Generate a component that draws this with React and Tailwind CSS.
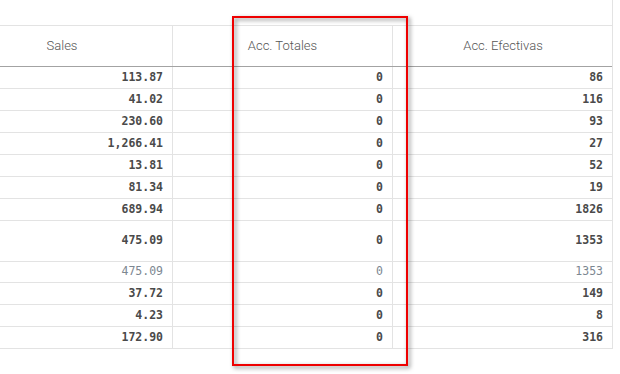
const rows = [
  { sales: '113.87', totales: '0', efectivas: '86', h: 'h-[22px]' },
  { sales: '41.02', totales: '0', efectivas: '116', h: 'h-[22px]' },
  { sales: '230.60', totales: '0', efectivas: '93', h: 'h-[22px]' },
  { sales: '1,266.41', totales: '0', efectivas: '27', h: 'h-[22px]' },
  { sales: '13.81', totales: '0', efectivas: '52', h: 'h-[22px]' },
  { sales: '81.34', totales: '0', efectivas: '19', h: 'h-[22px]' },
  { sales: '689.94', totales: '0', efectivas: '1826', h: 'h-[22px]' },
  { sales: '475.09', totales: '0', efectivas: '1353', h: 'h-[41px]' },
  { sales: '475.09', totales: '0', efectivas: '1353', h: 'h-[21px]', light: true },
  { sales: '37.72', totales: '0', efectivas: '149', h: 'h-[22px]' },
  { sales: '4.23', totales: '0', efectivas: '8', h: 'h-[22px]' },
  { sales: '172.90', totales: '0', efectivas: '316', h: 'h-[22px]' },
]

const headers = ['Sales', 'Acc. Totales', 'Acc. Efectivas']

function Cell({ children, light, last }) {
  return (
    <div
      className={`flex items-center justify-end pr-[9px] ${last ? '' : 'border-r border-[#e3e3e3]'} ${
        light ? 'font-normal text-[#7c8791]' : 'font-bold text-[#4a4a4a]'
      }`}
    >
      {children}
    </div>
  )
}

export default function App() {
  return (
    <div className="relative h-[374px] w-[620px] overflow-hidden bg-white">
      <div className="w-[613px] border-r border-[#e3e3e3] pt-[25px]">
        <div className="-ml-[48px]">
          <div className="grid h-[42px] grid-cols-[221px_220px_220px] border-y border-t-[#e3e3e3] border-b-[#a3a3a3] font-['Roboto',sans-serif] text-[13px] font-light text-[#555555]">
            {headers.map((h, i) => (
              <div
                key={h}
                className={`flex items-center justify-center ${i < 2 ? 'border-r border-[#e3e3e3]' : ''}`}
              >
                {h}
              </div>
            ))}
          </div>

          {rows.map((r, i) => (
            <div
              key={i}
              className={`grid grid-cols-[221px_220px_220px] border-b border-[#e3e3e3] font-['DejaVu_Sans_Mono',monospace] text-[11.5px] ${r.h}`}
            >
              <Cell light={r.light}>{r.sales}</Cell>
              <Cell light={r.light}>{r.totales}</Cell>
              <Cell light={r.light} last>
                <span className="pr-px">{r.efectivas}</span>
              </Cell>
            </div>
          ))}
        </div>
      </div>

      <div className="absolute left-[232px] top-[16px] h-[350px] w-[176px] border-2 border-[#ee0000] drop-shadow-[2px_2px_2px_rgba(0,0,0,0.5)]" />
    </div>
  )
}
